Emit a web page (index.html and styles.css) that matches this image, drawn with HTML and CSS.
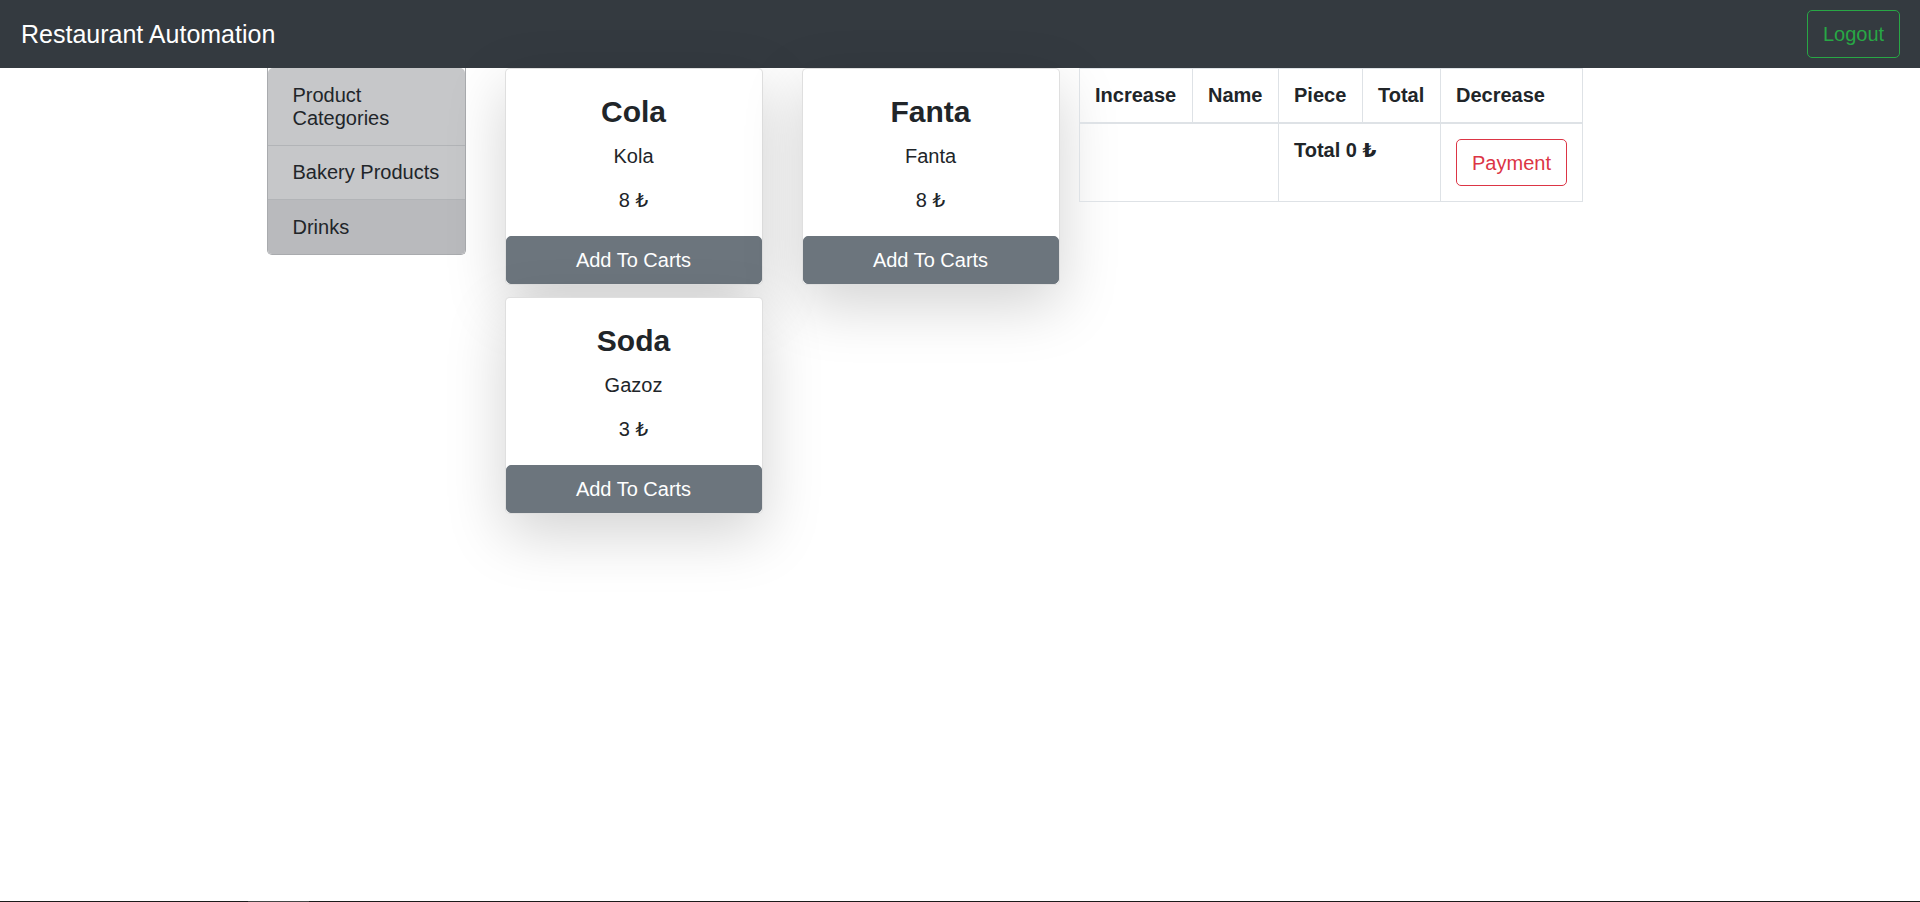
FILE: index.html
```html
<!DOCTYPE html>
<html lang="en">
<head>
<meta charset="utf-8">
<title>Restaurant Automation</title>
<link rel="stylesheet" href="styles.css">
</head>
<body>
<nav class="navbar">
  <a class="brand" href="#">Restaurant Automation</a>
  <button class="btn btn-logout">Logout</button>
</nav>
<div class="container">
  <div class="sidebar">
    <a class="list-item" href="#">Product Categories</a>
    <a class="list-item" href="#">Bakery Products</a>
    <a class="list-item active" href="#">Drinks</a>
  </div>
  <div class="cards">
    <div class="card">
      <div class="card-body">
        <h4 class="card-title">Cola</h4>
        <p class="card-text">Kola</p>
        <p class="card-price">8 ₺</p>
      </div>
      <button class="btn btn-cart">Add To Carts</button>
    </div>
    <div class="card">
      <div class="card-body">
        <h4 class="card-title">Fanta</h4>
        <p class="card-text">Fanta</p>
        <p class="card-price">8 ₺</p>
      </div>
      <button class="btn btn-cart">Add To Carts</button>
    </div>
    <div class="card">
      <div class="card-body">
        <h4 class="card-title">Soda</h4>
        <p class="card-text">Gazoz</p>
        <p class="card-price">3 ₺</p>
      </div>
      <button class="btn btn-cart">Add To Carts</button>
    </div>
  </div>
  <table class="cart">
    <thead>
      <tr>
        <th class="col-increase">Increase</th>
        <th class="col-name">Name</th>
        <th class="col-piece">Piece</th>
        <th class="col-total">Total</th>
        <th>Decrease</th>
      </tr>
    </thead>
    <tbody>
      <tr>
        <td colspan="2"></td>
        <td colspan="2" class="total">Total 0 ₺</td>
        <td><button class="btn btn-payment">Payment</button></td>
      </tr>
    </tbody>
  </table>
</div>
<div class="bottom-line"><span class="bottom-thumb"></span></div>
</body>
</html>
```

FILE: styles.css
```css
* { box-sizing: border-box; }

html, body {
  margin: 0;
  padding: 0;
  background: #ffffff;
}

html { height: 100%; }

body {
  min-height: 100%;
  font-family: "Liberation Sans", Arial, "DejaVu Sans", sans-serif;
  font-size: 20px;
  color: #212529;
}

.navbar {
  display: flex;
  justify-content: space-between;
  align-items: center;
  padding: 10px 20px 10px 21px;
  background: #343a40;
  height: 68px;
}

.brand {
  font-size: 25px;
  line-height: 37.5px;
  color: #ffffff;
  text-decoration: none;
  padding: 7px 0 5px;
}

.btn {
  font-family: inherit;
  font-size: 20px;
  line-height: 30px;
  padding: 7.5px 15px;
  border-radius: 5px;
  border: 1px solid transparent;
  background: transparent;
  cursor: pointer;
}

.btn-logout {
  color: #28a745;
  border-color: #28a745;
  width: 93px;
  height: 47.5px;
}

.container {
  width: 1425px;
  margin: 0 auto;
  padding: 0 19px;
  display: flex;
  align-items: flex-start;
}

.sidebar {
  flex: none;
  width: 199px;
  margin-right: 39px;
  display: flex;
  flex-direction: column;
  border: 1px solid #a9abae;
  border-top: none;
  border-radius: 0 0 5px 5px;
  overflow: hidden;
}

.list-item {
  display: block;
  padding: 15.5px 25px 15px;
  line-height: 23px;
  color: #212529;
  text-decoration: none;
  background: #c6c7c9;
  border-top: 1px solid #b2b4b7;
}

.list-item:first-child {
  border-top: none;
  border-radius: 5px 5px 0 0;
}

.list-item.active {
  background: #b9babd;
}

.cards {
  flex: none;
  display: grid;
  grid-template-columns: 258px 258px;
  column-gap: 39px;
  row-gap: 12.5px;
  margin-right: 19.5px;
}

.card {
  display: flex;
  flex-direction: column;
  background: #ffffff;
  border: 1px solid rgba(0, 0, 0, 0.125);
  border-radius: 5px;
  box-shadow: 0 20px 60px rgba(0, 0, 0, 0.175);
}

.card-body {
  padding: 25px 20px 24px;
  text-align: center;
}

.card-title {
  margin: 0 0 15px;
  font-size: 30px;
  line-height: 36px;
  font-weight: 700;
}

.card-text {
  margin: 0 0 21px;
  line-height: 23px;
}

.card-price {
  margin: 0;
  line-height: 23px;
}

.btn-cart {
  display: block;
  width: 100%;
  height: 47.5px;
  background: #6c757d;
  border-color: #6c757d;
  color: #ffffff;
}

.cart {
  border-collapse: collapse;
  border: 1px solid #dee2e6;
  line-height: 23px;
}

.cart th,
.cart td {
  border: 1px solid #dee2e6;
  padding: 15px;
  text-align: left;
  vertical-align: top;
}

.cart th {
  font-weight: 700;
  border-top: none;
  border-bottom-width: 2px;
}

.cart .col-increase { width: 113px; }
.cart .col-name { width: 86px; }
.cart .col-piece { width: 84px; }
.cart .col-total { width: 78px; }

.cart .total {
  font-weight: 700;
}

.btn-payment {
  display: block;
  color: #dc3545;
  border-color: #dc3545;
  height: 47px;
  width: 111px;
}

.bottom-line {
  position: fixed;
  left: 0;
  right: 0;
  bottom: 0;
  height: 1px;
  background: #1b1b1b;
}

.bottom-thumb {
  position: absolute;
  left: 248px;
  width: 61px;
  top: 0;
  height: 1px;
  background: #454545;
}
```
